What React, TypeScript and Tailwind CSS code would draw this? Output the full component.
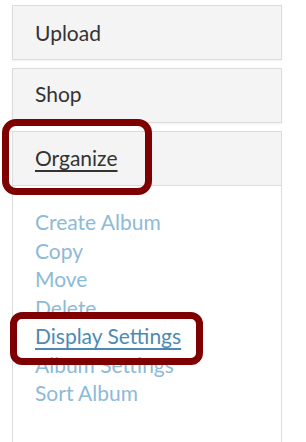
const links = ['Create Album', 'Copy', 'Move', 'Delete', 'Display Settings', 'Album Settings', 'Sort Album']

export default function App() {
  return (
    <div
      className="relative w-[306px] h-[442px] overflow-hidden bg-white pl-[12px] pt-[5px]"
      style={{ fontFamily: 'Lato, "Liberation Sans", sans-serif' }}
    >
      <div className="flex flex-col gap-[8px] w-[270px]">
        <div className="h-[55px] bg-[#f4f4f4] border border-[#dcdcdc] shadow-[0_1px_2px_rgba(0,0,0,0.06)] pl-[22px] pt-[13px] text-[21px] leading-[28px] text-[#333]">
          Upload
        </div>
        <div className="h-[55px] bg-[#f4f4f4] border border-[#dcdcdc] shadow-[0_1px_2px_rgba(0,0,0,0.06)] pl-[22px] pt-[11px] text-[21px] leading-[28px] text-[#333]">
          Shop
        </div>
        <div className="h-[330px] border border-[#dcdcdc]">
          <div className="h-[54px] bg-[#f4f4f4] border-b border-[#dcdcdc] pl-[22px] pt-[12px] text-[21px] leading-[28px] text-[#333]">
            <span className="underline underline-offset-[4px] decoration-[1.5px]">Organize</span>
          </div>
          <ul className="pl-[22px] pt-[22px] text-[21px] leading-[28.5px]">
            {links.map((l) => (
              <li
                key={l}
                className={
                  l === 'Display Settings'
                    ? 'text-[#4c8ab4] underline underline-offset-[4px] decoration-[1.5px]'
                    : 'text-[#8dbad7]'
                }
              >
                {l}
              </li>
            ))}
          </ul>
        </div>
      </div>

      <div className="absolute left-[2px] top-[119px] w-[150px] h-[76px] rounded-[14px] border-[7px] border-[#7f0000]" />
      <div className="absolute left-[10px] top-[312px] w-[193px] h-[53px] rounded-[12px] border-[7px] border-[#7f0000]" />
    </div>
  )
}
